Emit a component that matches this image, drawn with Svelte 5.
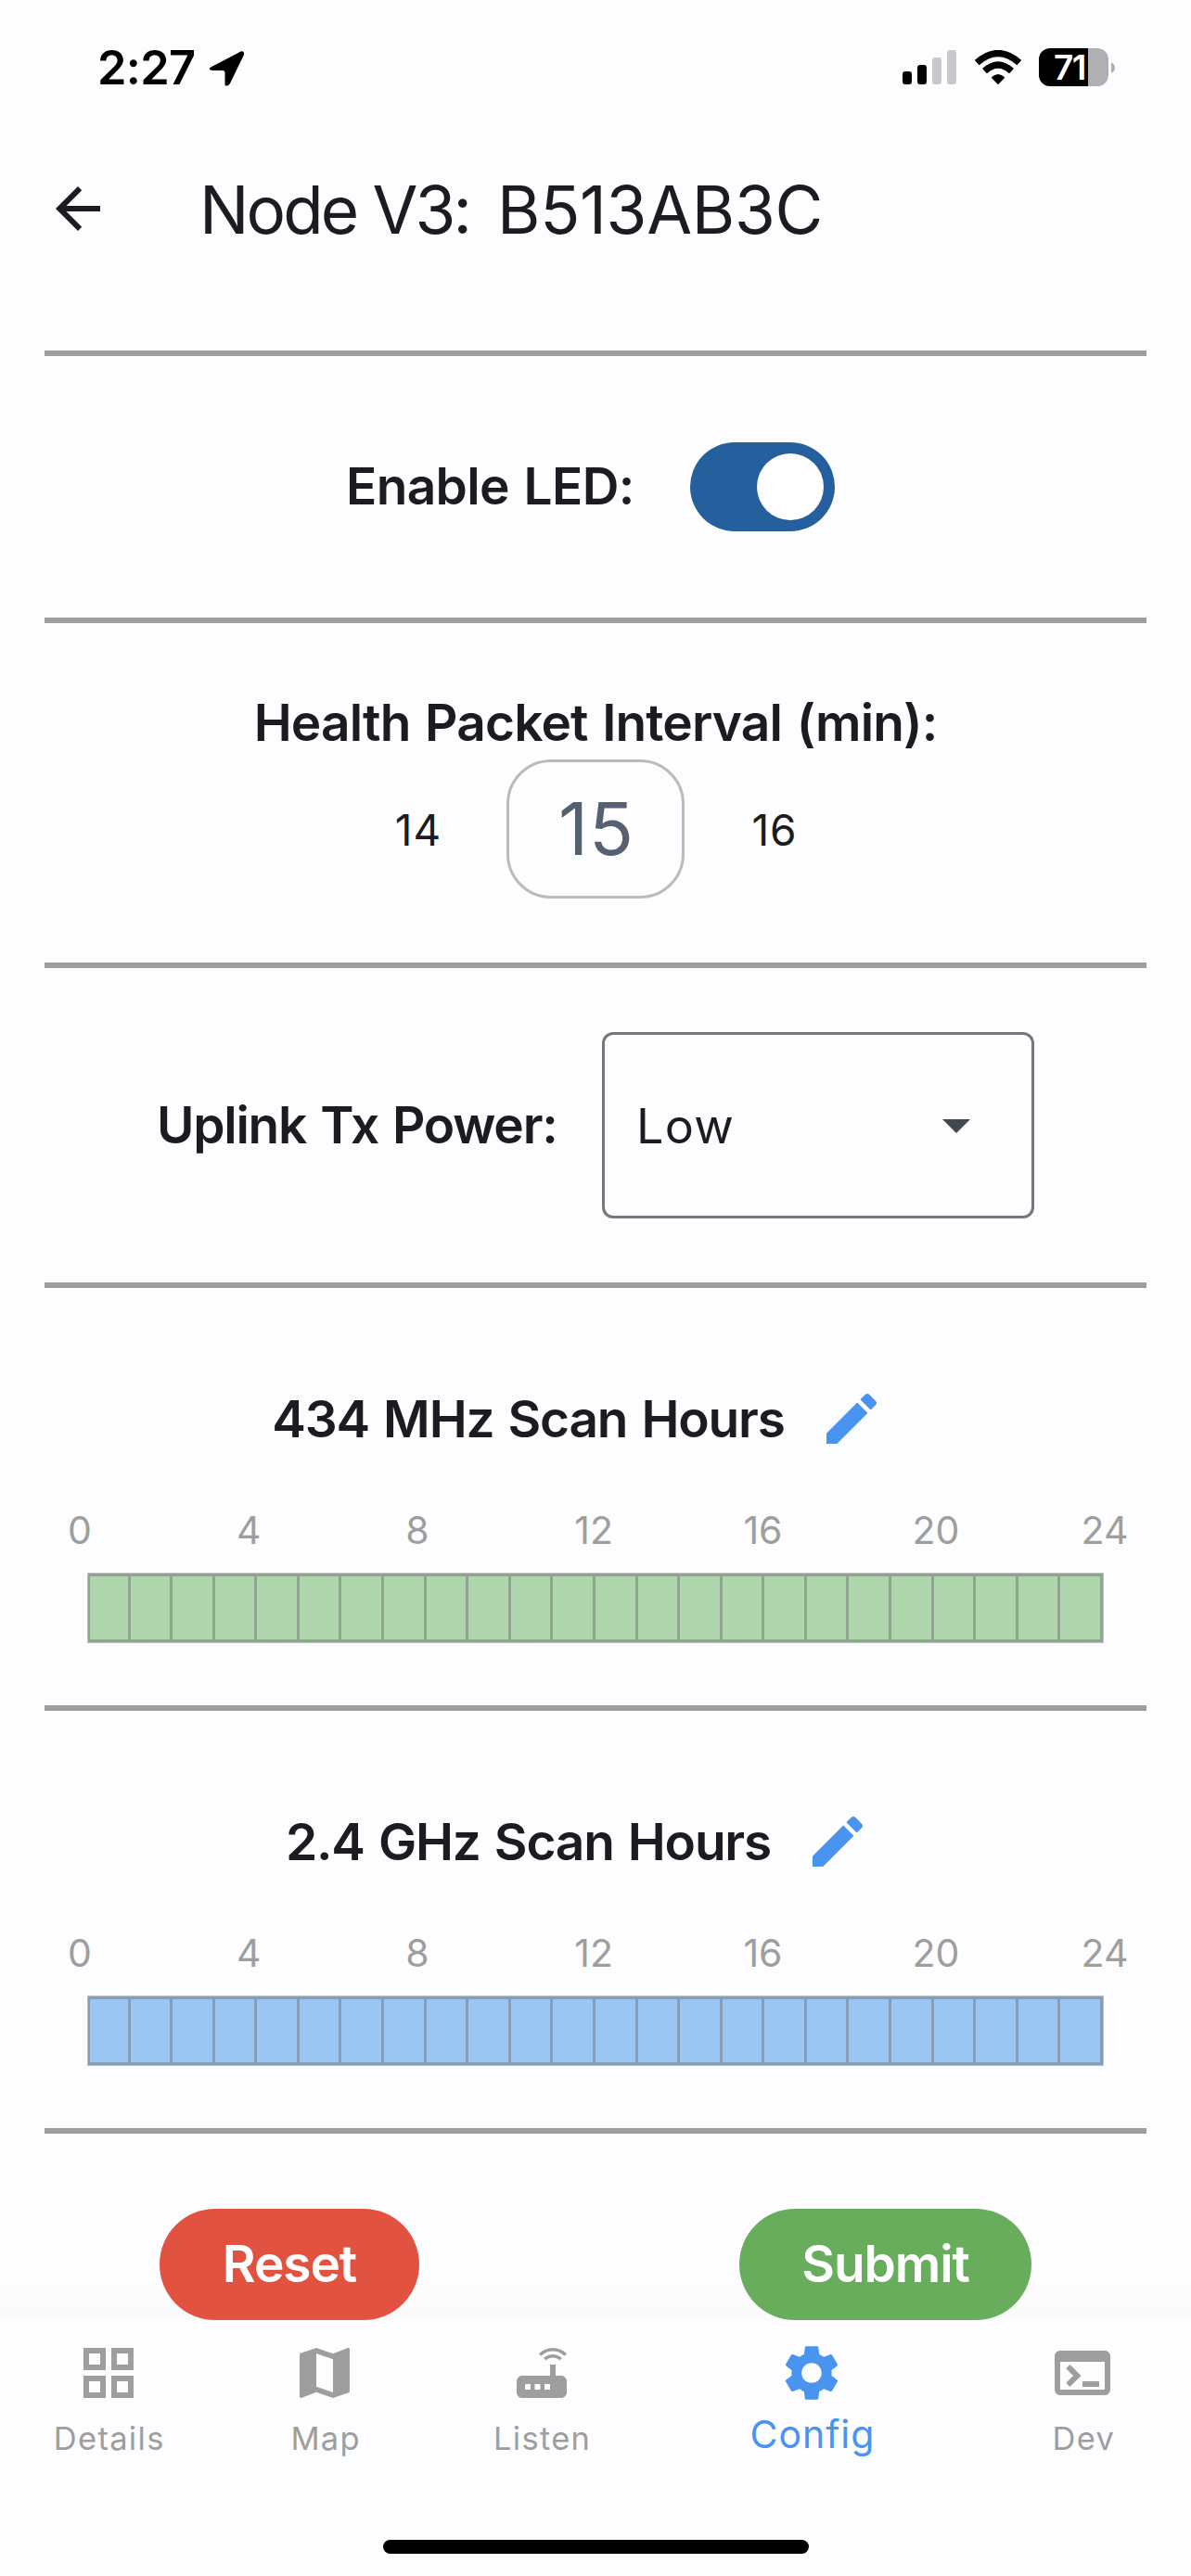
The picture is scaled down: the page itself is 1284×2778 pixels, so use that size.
<script>
  const hours = [0, 4, 8, 12, 16, 20, 24];
  const scans = [
    { title: '434 MHz Scan Hours', tone: 'green' },
    { title: '2.4 GHz Scan Hours', tone: 'blue' }
  ];
  const tabs = [
    { label: 'Details', d: 'M3 3v8h8V3H3zm6 6H5V5h4v4zm-6 4v8h8v-8H3zm6 6H5v-4h4v4zm4-16v8h8V3h-8zm6 6h-4V5h4v4zm-6 4v8h8v-8h-8zm6 6h-4v-4h4v4z' },
    { label: 'Map', d: 'M20.5 3l-.16.03L15 5.1 9 3 3.36 4.9c-.21.07-.36.25-.36.48V20.5c0 .28.22.5.5.5l.16-.03L9 18.9l6 2.1 5.64-1.9c.21-.07.36-.25.36-.48V3.5c0-.28-.22-.5-.5-.5zM15 19l-6-2.11V5l6 2.11V19z' },
    { label: 'Listen', d: 'M20.2 5.9l.8-.8C19.6 3.7 17.8 3 16 3s-3.6.7-5 2.1l.8.8C13 4.8 14.5 4.2 16 4.2s3 .6 4.2 1.7zm-.9.8c-.9-.9-2.1-1.4-3.3-1.4s-2.4.5-3.3 1.4l.8.8c.7-.7 1.6-1 2.5-1 .9 0 1.8.3 2.5 1l.8-.8zM19 13h-2V9h-2v4H5c-1.1 0-2 .9-2 2v4c0 1.1.9 2 2 2h14c1.1 0 2-.9 2-2v-4c0-1.1-.9-2-2-2zM8 18H6v-2h2v2zm3.5 0h-2v-2h2v2zm3.5 0h-2v-2h2v2z' },
    { label: 'Config', active: true, d: 'M19.14 12.94c.04-.3.06-.61.06-.94 0-.32-.02-.64-.07-.94l2.03-1.58c.18-.14.23-.41.12-.61l-1.92-3.32c-.12-.22-.37-.29-.59-.22l-2.39.96c-.5-.38-1.03-.7-1.62-.94l-.36-2.54c-.04-.24-.24-.41-.48-.41h-3.84c-.24 0-.43.17-.47.41l-.36 2.54c-.59.24-1.13.57-1.62.94l-2.39-.96c-.22-.08-.47 0-.59.22L2.74 8.87c-.12.21-.08.47.12.61l2.03 1.58c-.05.3-.09.63-.09.94s.02.64.07.94l-2.03 1.58c-.18.14-.23.41-.12.61l1.92 3.32c.12.22.37.29.59.22l2.39-.96c.5.38 1.03.7 1.62.94l.36 2.54c.05.24.24.41.48.41h3.84c.24 0 .44-.17.47-.41l.36-2.54c.59-.24 1.13-.56 1.62-.94l2.39.96c.22.08.47 0 .59-.22l1.92-3.32c.12-.22.07-.47-.12-.61l-2.01-1.58zM12 15.6c-1.98 0-3.6-1.62-3.6-3.6s1.62-3.6 3.6-3.6 3.6 1.62 3.6 3.6-1.62 3.6-3.6 3.6z' },
    { label: 'Dev', d: 'M20 4H4c-1.11 0-2 .9-2 2v12c0 1.1.89 2 2 2h16c1.1 0 2-.9 2-2V6c0-1.1-.89-2-2-2zm0 14H4V8h16v10zm-2-1h-6v-2h6v2zM7.5 17l-1.41-1.41L8.67 13l-2.59-2.59L7.5 9l4 4-4 4z' }
  ];
</script>

<div class="screen">
  <div class="status">
    <span class="time">2:27</span>
    <svg class="loc" viewBox="0 0 40 40"><path d="M3 18 34.500 1.600Q38.500 0 38 5L23 36Q21.500 39 18 38.500 17.500 38 17.500 36V25Q17.500 22 15 22H4Q-2 21 3 18Z" /></svg>
    <svg class="signal" viewBox="0 0 58 38">
      <rect x="0" y="23" width="10" height="14" rx="3" /><rect x="16" y="16" width="10" height="21" rx="3" />
      <rect class="off" x="32" y="8" width="10" height="29" rx="3" /><rect class="off" x="48" y="0" width="10" height="37" rx="3" />
    </svg>
    <svg class="wifi" viewBox="0 0 52 38">
      <path d="M26 37.200 18.600 29.600Q26 22.500 33.400 29.600Z" />
      <path class="arc" d="M11.500 22.600Q26 9.400 40.500 22.600M3.200 13.600Q26 -6.500 48.800 13.600" />
    </svg>
    <div class="battery"><div class="cell"><span>71</span></div>
      <svg viewBox="0 0 5 14"><path d="M0 0Q5 2 5 7T0 14Z" /></svg>
    </div>
  </div>

  <header>
    <svg class="back" viewBox="0 0 24 24"><path d="M20 11H7.830l5.590-5.590L12 4l-8 8 8 8 1.410-1.410L7.830 13H20v-2z" /></svg>
    <h1><span class="model">Node V3:</span><span class="id">B513AB3C</span></h1>
  </header>

  <main>
    <section class="led">
      <span class="label l-led">Enable LED:</span>
      <div class="switch"><i></i></div>
    </section>
    <section class="interval">
      <span class="label l-int">Health Packet Interval (min):</span>
      <div class="picker"><span>14</span><b>15</b><span>16</span></div>
    </section>
    <section class="power">
      <span class="label l-pow">Uplink Tx Power:</span>
      <div class="select"><span>Low</span><svg viewBox="0 0 30 15"><path d="M0 0h30L15 15z" /></svg></div>
    </section>
    {#each scans as scan}
      <section class="scan">
        <div class="head">
          <span class="label">{scan.title}</span>
          <svg viewBox="0 0 24 24"><path d="M3 17.250V21h3.750L17.810 9.940l-3.750-3.750L3 17.250zM20.710 7.040c.39-.39.39-1.020 0-1.410l-2.340-2.340c-.39-.39-1.020-.39-1.410 0l-1.830 1.830 3.750 3.750 1.830-1.830z" /></svg>
        </div>
        <div class="ticks">{#each hours as h}<span>{h}</span>{/each}</div>
        <div class="bar {scan.tone}">{#each Array(24) as _}<i></i>{/each}</div>
      </section>
    {/each}
    <div class="actions">
      <button class="reset">Reset</button>
      <button class="submit">Submit</button>
    </div>
  </main>

  <nav>
    {#each tabs as tab}
      <div class="tab" class:active={tab.active}>
        <svg viewBox="0 0 24 24"><path d={tab.d} /></svg>
        <span>{tab.label}</span>
      </div>
    {/each}
  </nav>
  <div class="home"><i></i></div>
</div>

<style>
  :global(body) { background: #fdfdff; }
  .screen { width: 1284px; height: 2778px; display: flex; flex-direction: column; overflow: hidden; background: #fdfdff; color: #1a1c1e; font-family: Inter, "Liberation Sans", sans-serif; box-sizing: border-box; }
  svg { display: block; fill: currentColor; flex: none; }
  span { white-space: nowrap; }

  .status { height: 145px; display: flex; align-items: center; color: #000; padding-left: 105px; box-sizing: border-box; flex: none; }
  .time { font-size: 50.500px; font-weight: 600; width: 120px; letter-spacing: -0.700px; }
  .loc { width: 40px; height: 40px; margin-top: 2px; }
  .signal { width: 58px; height: 38px; margin-left: 708px; margin-top: 1px; }
  .signal .off { fill: #c9c9cb; }
  .wifi { width: 52px; height: 38px; margin-left: 19px; margin-top: 1px; }
  .wifi .arc { fill: none; stroke: #000; stroke-width: 7.200; }
  .battery { display: flex; align-items: center; gap: 3px; margin-left: 18px; color: #b0b0b2; }
  .cell { width: 75px; height: 41px; border-radius: 12px; background: linear-gradient(90deg, #000 53px, #b0b0b2 53px); color: #fff; display: flex; align-items: center; padding-left: 16px; box-sizing: border-box; }
  .cell span { font-size: 37px; font-weight: 600; letter-spacing: -1.500px; }
  .battery svg { width: 4px; height: 14px; }

  header { height: 160px; display: flex; align-items: center; padding-left: 48px; flex: none; }
  .back { width: 72px; height: 72px; }
  h1 { margin: 1px 0 0 95px; font-size: 71px; font-weight: 400; display: flex; }
  .model { width: 321px; letter-spacing: -2.900px; }
  .id { letter-spacing: -0.300px; }

  main { margin-top: 73px; padding: 0 48px; height: 2124px; box-sizing: border-box; flex: none; background: linear-gradient(to top, #fafafb, #fdfdff 45px); }
  section { border-top: 6px solid #9e9e9e; box-sizing: border-box; }
  .label { font-size: 55px; font-weight: 600; line-height: 66px; word-spacing: 2.500px; }
  .led { height: 288px; display: flex; align-items: center; padding-left: 325px; }
  .l-led { width: 371px; letter-spacing: -0.650px; padding-bottom: 2px; }
  .switch { width: 156px; height: 96px; border-radius: 48px; background: #265f9e; padding: 12px; box-sizing: border-box; display: flex; justify-content: flex-end; }
  .switch i { width: 72px; height: 72px; border-radius: 50%; background: #fff; }
  .interval { height: 372px; padding-top: 74px; display: flex; flex-direction: column; align-items: center; }
  .l-int { letter-spacing: -0.850px; }
  .picker { display: grid; grid-template-columns: 192px 192px 192px; margin-top: 7px; align-items: center; text-align: center; font-size: 46px; }
  .picker span { letter-spacing: 1px; padding: 2px 0 0 2px; }
  .picker b { height: 150px; line-height: 142px; box-sizing: border-box; border: 3px solid #bbb; border-radius: 48px; font-size: 79px; font-weight: 400; color: #556070; letter-spacing: 1px; padding-left: 2px; }
  .power { height: 345px; display: flex; align-items: center; padding-left: 121px; }
  .l-pow { width: 480px; letter-spacing: -1.250px; padding-bottom: 1px; }
  .select { width: 466px; height: 201px; box-sizing: border-box; border: 3px solid #74777f; border-radius: 12px; display: flex; align-items: center; justify-content: space-between; padding: 2px 66px 0 34px; font-size: 52px; letter-spacing: 1.300px; }
  .select svg { width: 30px; height: 15px; color: #43474e; }
  .scan { height: 456px; padding-top: 105px; }
  .head { display: flex; align-items: center; height: 72px; justify-content: center; gap: 36px; margin-right: 37px; }
  .head .label { letter-spacing: -1.200px; padding-bottom: 1px; }
  .head svg { width: 72px; height: 72px; color: #4894ee; }
  .ticks { display: grid; grid-template-columns: repeat(6, 182.100px) 60px; margin: 59px 0 0 25px; width: 1160px; height: 50px; line-height: 50px; font-size: 41px; color: #9e9e9e; }
  .bar { display: grid; grid-template-columns: repeat(24, 1fr); margin: 21px 46px 0 46px; height: 76px; box-sizing: border-box; border: 1px solid #bebec0; }
  .bar i { border: solid var(--line); border-width: 3px 3px 3px 0; background: var(--fill); }
  .bar i:first-child { border-left-width: 2px; }
  .green { --fill: #aed5ab; --line: #90a48f; }
  .blue { --fill: #9bc6f4; --line: #879eb8; }
  .actions { border-top: 6px solid #9e9e9e; padding: 81px 124px 0; display: flex; justify-content: space-between; }
  button { height: 120px; border: 0; border-radius: 60px; color: #fff; font: 600 55px Inter, "Liberation Sans", sans-serif; letter-spacing: -1.100px; padding: 0 0 2px; }
  .reset { width: 280px; background: #e15241; }
  .submit { width: 315px; background: #67ad5b; }

  nav { height: 237px; display: flex; flex: none; color: #9e9e9e; }
  .tab { flex: 1; display: flex; flex-direction: column; align-items: center; padding-top: 21px; }
  .tab.active { flex: 1.500; color: #4894ee; }
  .tab svg { width: 72px; height: 72px; }
  .tab span { font-size: 34.500px; line-height: 50px; margin-top: 10px; letter-spacing: 1.300px; padding-left: 2px; }
  .tab.active span { font-size: 41px; margin-top: 5px; letter-spacing: 1px; padding-left: 1px; }
  .home { display: flex; justify-content: center; }
  .home i { width: 459px; height: 15px; border-radius: 8px; background: #000; }
</style>
